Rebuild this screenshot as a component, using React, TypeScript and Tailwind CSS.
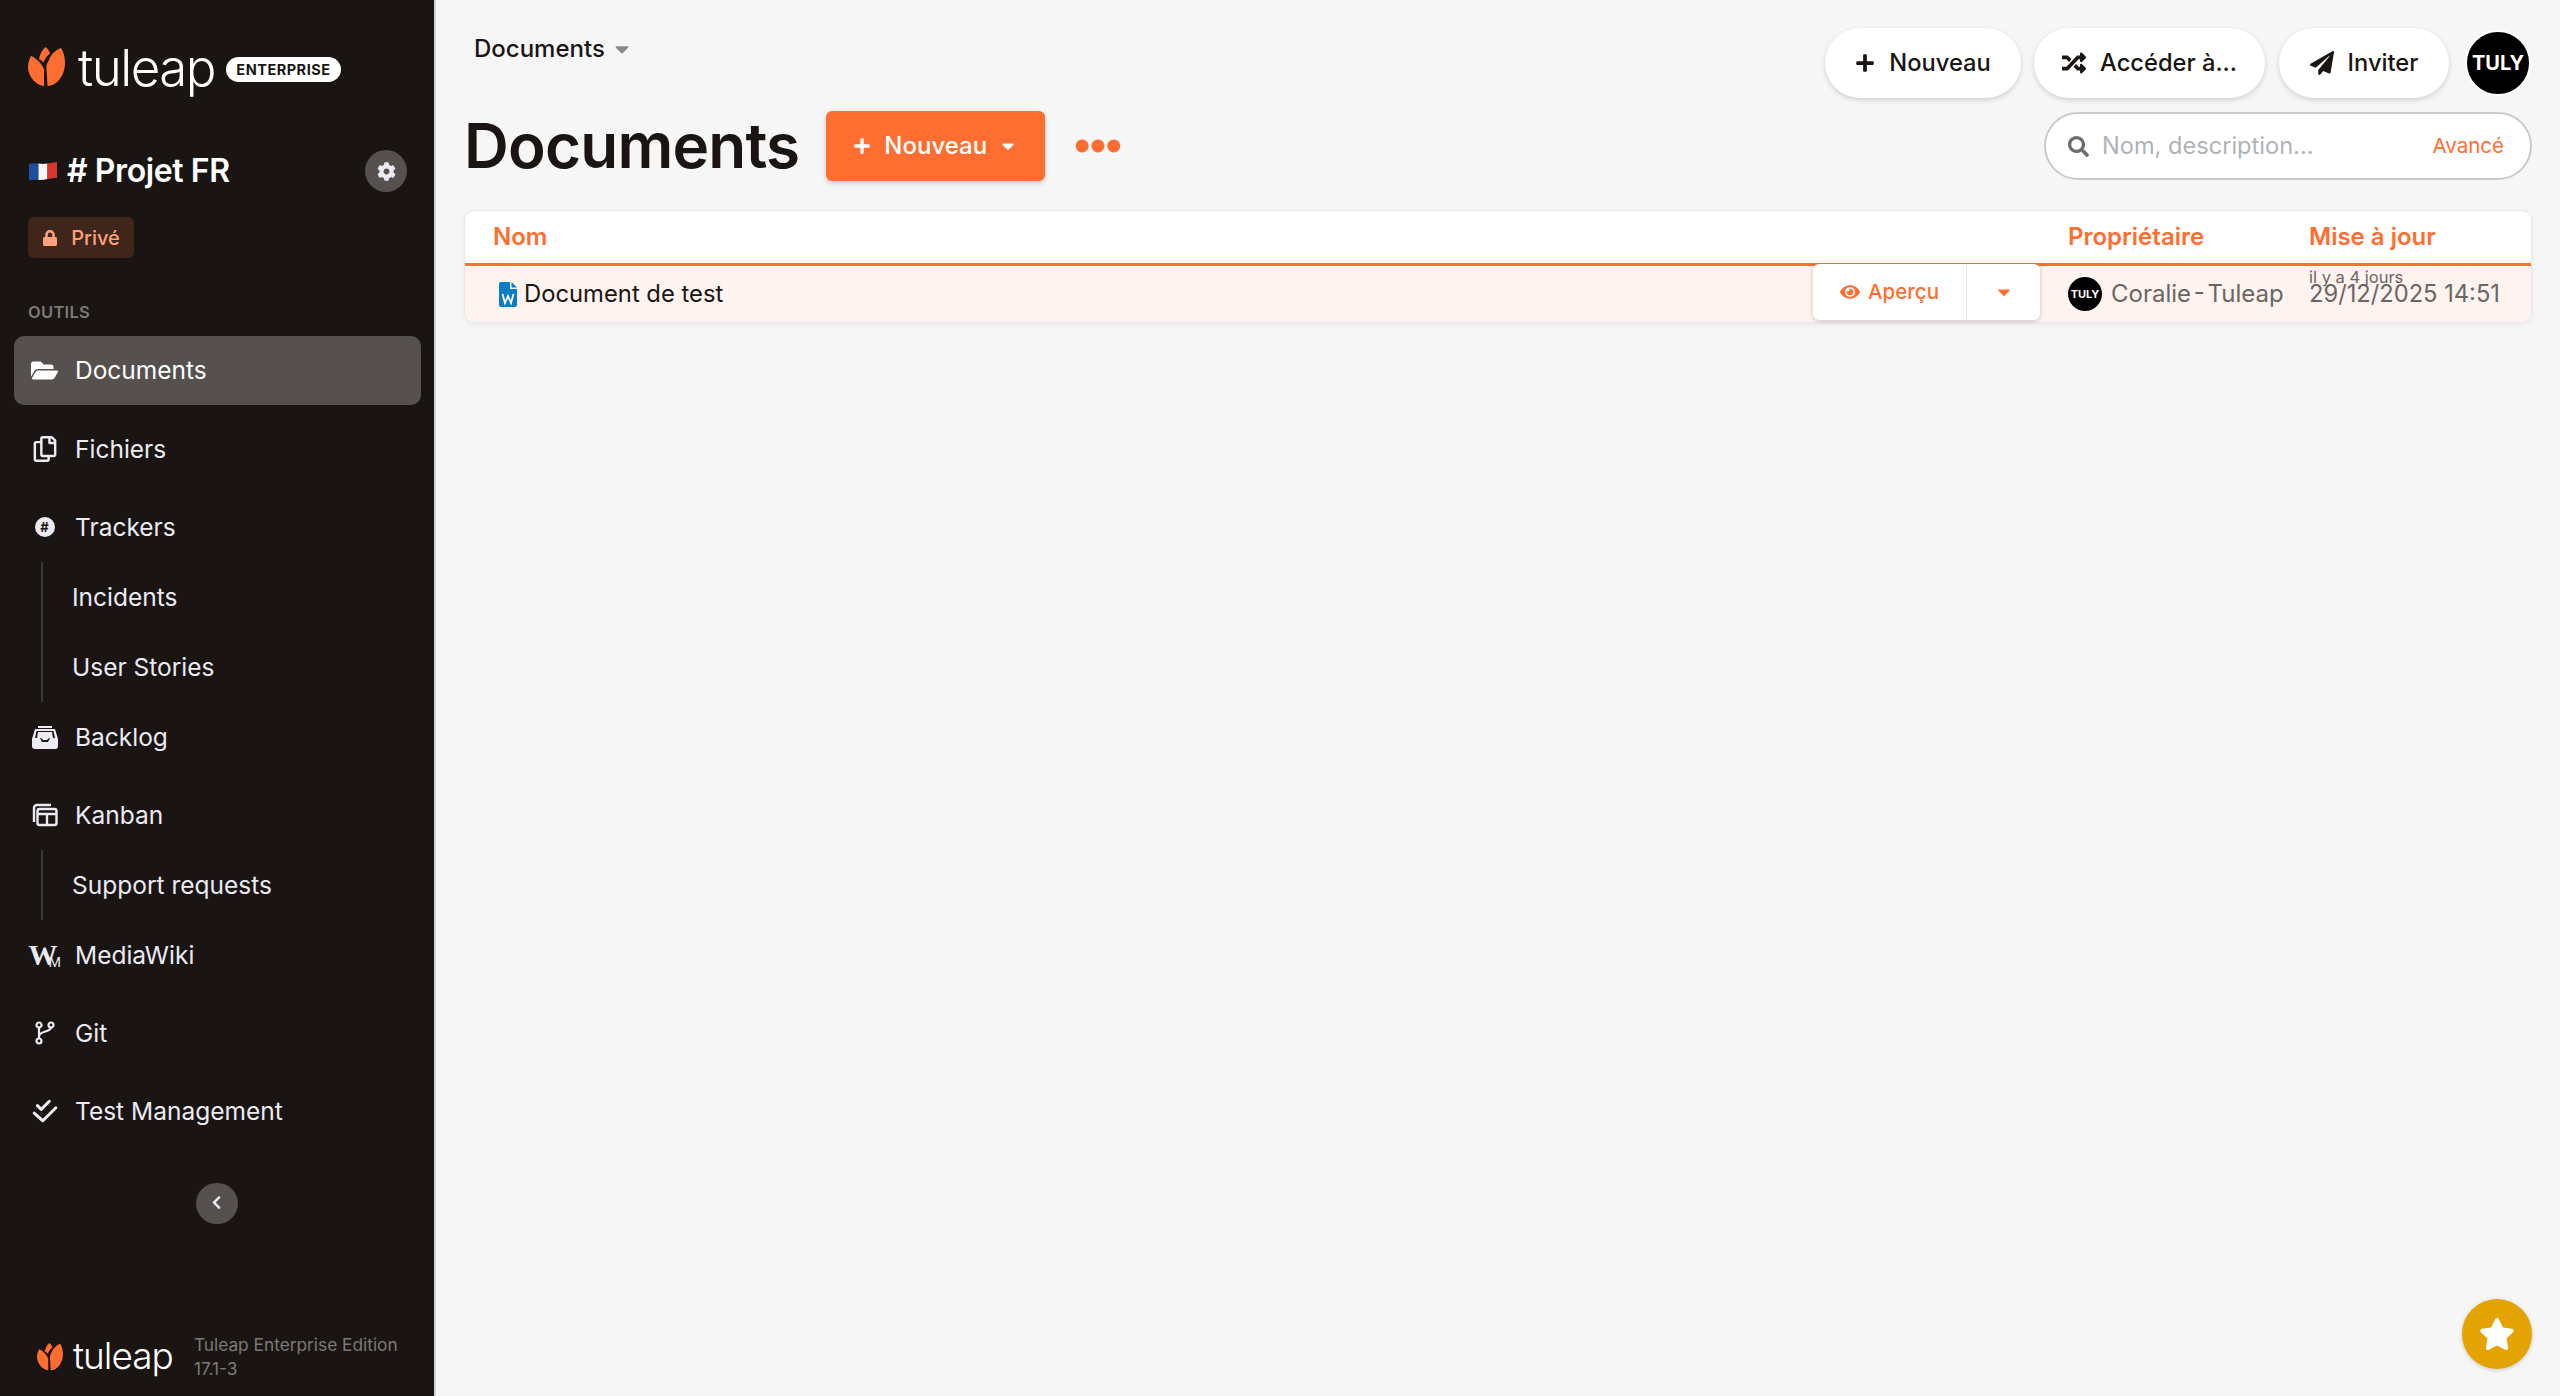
import React from 'react';
import {
  FaCaretDown,
  FaChevronLeft,
  FaCog,
  FaEllipsisH,
  FaEye,
  FaFolderOpen,
  FaLock,
  FaPaperPlane,
  FaPlus,
  FaRandom,
  FaRegCopy,
  FaSearch,
  FaStar,
} from 'react-icons/fa';

const Tulip = ({ className }: { className: string }) => (
  <svg viewBox="0 0 37 40" className={className}>
    <path fill="#ff6e30" d="M17 39C8 39 0 29 0 20c0-5 2-9 3-11 3 1 7 4 10 8l3 5 0 17z" />
    <path fill="#ff6e30" d="M19.500 39C29 39 37 28 37 16c0-7-2-12-4-15-5 2-10 6-12 12-2 3-3 6-2.500 9z" />
    <path fill="#ff6e30" d="M11 12c1-5 3-9 6.500-12 2 1.500 4 4 4.500 6.500-3 2-5 5-6.500 9-1-1.500-2.500-2.500-4.500-3.500z" />
  </svg>
);

const BacklogIcon = () => (
  <svg viewBox="0 0 28 24" className="h-[24px] w-[28px]" fill="#ecebf4">
    <path d="M7 1h14v2H7zM5.500 4h17L23 6H5z" />
    <path fillRule="evenodd" d="M4 4 1 14v7a3 3 0 0 0 3 3h20a3 3 0 0 0 3-3v-7L24 4h-2l2 9h-5l-2 4h-6l-2-4H4l2-9zM7 7h14l1 6h-4l-2 2h-4l-2-2H6z" />
  </svg>
);

const KanbanIcon = () => (
  <svg viewBox="0 0 26 24" className="h-[24px] w-[26px]" fill="none" stroke="#ecebf4" strokeWidth="2.400">
    <path d="M2 19V5a3 3 0 0 1 3-3h14" />
    <rect x="5.500" y="6" width="19" height="16" rx="2" />
    <path d="M5.500 11h19M15 11v11" />
  </svg>
);

const TrackerIcon = () => (
  <span className="flex h-[20px] w-[20px] items-center justify-center rounded-full bg-[#ecebf4] text-[13px] leading-none font-bold text-[#1a1512]">
    #
  </span>
);

const WikiIcon = () => (
  <span className="flex h-[26px] w-[32px] items-start font-['Liberation_Serif',serif] leading-none font-bold text-[#ecebf4]">
    <span className="-mt-[1px] text-[29px]">W</span>
    <span className="-ml-[9px] pt-[12px] font-['Liberation_Sans',sans-serif] text-[15px] font-normal">M</span>
  </span>
);

const GitIcon = () => (
  <svg viewBox="0 0 20 24" className="h-[24px] w-[20px]" fill="none" stroke="#ecebf4" strokeWidth="2.200">
    <circle cx="4" cy="4" r="2.500" />
    <circle cx="4" cy="20" r="2.500" />
    <circle cx="16" cy="4" r="2.500" />
    <path d="M4 6.500v11M16 6.500c0 5-12 3-12 9" />
  </svg>
);

const TestIcon = () => (
  <svg viewBox="0 0 24 22" className="h-[24px] w-[26px]" fill="none" stroke="#ecebf4" strokeWidth="2.800" strokeLinecap="round" strokeLinejoin="round">
    <path d="M5 6l3.500 3.500L16 2M2 13l8 7 12-12" />
  </svg>
);

const WordIcon = () => (
  <svg viewBox="0 0 18 25" className="h-[25px] w-[18px]">
    <path fill="#0c7cc4" d="M2 0h9v7h7v16a2 2 0 0 1-2 2H2a2 2 0 0 1-2-2V2a2 2 0 0 1 2-2z" />
    <path fill="#0c7cc4" d="M12.500 0 18 5.500h-5.500z" />
    <path fill="none" stroke="#fff" strokeWidth="1.800" d="M3.500 12l2.500 9 3-7 3 7 2.500-9" />
  </svg>
);

interface NavItem {
  label: string;
  icon: React.ReactNode;
  children?: string[];
}

const navItems: NavItem[] = [
  { label: 'Fichiers', icon: <FaRegCopy className="text-[26px] text-[#ecebf4]" /> },
  { label: 'Trackers', icon: <TrackerIcon />, children: ['Incidents', 'User Stories'] },
  { label: 'Backlog', icon: <BacklogIcon /> },
  { label: 'Kanban', icon: <KanbanIcon />, children: ['Support requests'] },
  { label: 'MediaWiki', icon: <WikiIcon /> },
  { label: 'Git', icon: <GitIcon /> },
  { label: 'Test Management', icon: <TestIcon /> },
];

const Sidebar = () => (
  <aside className="flex h-[1396px] w-[436px] shrink-0 flex-col border-r-[2px] border-[#d3d2d1] bg-[#1a1512] pl-[14px] text-[#ecebf4]">
    <div className="mt-[44px] flex h-[46px] items-center pl-[14px]">
      <Tulip className="h-[40px] w-[37px]" />
      <span className="ml-[13px] text-[51px] leading-none font-light tracking-[-1.500px] text-white">tuleap</span>
      <span className="mt-[5px] ml-[11px] flex h-[25px] w-[115px] items-center justify-center rounded-full bg-white text-[14.500px] font-bold tracking-[0.500px] text-[#1a1512]">
        ENTERPRISE
      </span>
    </div>

    <div className="mt-[60px] flex h-[42px] w-[393px] items-center justify-between pl-[15px]">
      <div className="flex items-center">
        <svg viewBox="0 0 28 19" className="h-[19px] w-[28px]">
          <path fill="#1d4f9c" d="M0 2c3-1 6-1 9.500-.500V18C6 17.500 3 17.500 0 18.500z" />
          <path fill="#f5f5f5" d="M9.500 1.500c3 .5 6 .5 9 0V17c-3 .8-6 1.200-9 1z" />
          <path fill="#d9352c" d="M18.500 1.500c3-.5 6-1 9.500-1.500v16c-3 0-6.500.5-9.500 1z" />
        </svg>
        <span className="ml-[10px] text-[32px] leading-none font-semibold tracking-[-0.400px] text-white">
          # Projet FR
        </span>
      </div>
      <span className="flex h-[42px] w-[42px] items-center justify-center rounded-full bg-[#56514e]">
        <FaCog className="text-[19px]" />
      </span>
    </div>

    <div className="mt-[25px] ml-[14px] flex h-[41px] w-[106px] items-center justify-center gap-[13px] rounded-[6px] bg-[#40251a] text-[20px] font-medium text-[#ffa27b]">
      <FaLock className="text-[16px]" />
      <span>Privé</span>
    </div>

    <div className="mt-[44px] ml-[14px] text-[16.500px] leading-[20px] font-semibold tracking-[0.300px] text-[#7d7977]">
      OUTILS
    </div>

    <nav className="mt-[14px] flex w-[407px] flex-col">
      <div className="mb-[5px] flex h-[69px] items-center rounded-[10px] bg-[#56514e]">
        <span className="flex w-[61px] justify-center">
          <FaFolderOpen className="text-[27px] text-white" />
        </span>
        <span className="text-[24.500px] leading-none text-white">Documents</span>
      </div>
      {navItems.map((item) => (
        <div key={item.label} className="flex flex-col">
          <div className="flex h-[78px] items-center">
            <span className="flex w-[61px] justify-center">{item.icon}</span>
            <span className="text-[24.500px] leading-none text-[#ecebf4]">{item.label}</span>
          </div>
          {item.children && (
            <div className="-mt-[4px] -mb-[4px] ml-[27px] flex flex-col border-l-[2px] border-[#3c3835]">
              {item.children.map((child) => (
                <div key={child} className="flex h-[70px] items-center pl-[29px] text-[24.500px] leading-none text-[#ecebf4]">
                  {child}
                </div>
              ))}
            </div>
          )}
        </div>
      ))}
    </nav>

    <button className="mt-[33px] ml-[182px] flex h-[41px] w-[42px] items-center justify-center rounded-full bg-[#56514e]">
      <FaChevronLeft className="-mt-[2px] -ml-[2px] text-[15px]" />
    </button>

    <div className="mt-auto mb-[15px] flex items-center pl-[23px]">
      <Tulip className="h-[28px] w-[26px]" />
      <span className="-mt-[3px] ml-[10px] text-[37px] leading-none font-light tracking-[-1px] text-white">tuleap</span>
      <div className="ml-[21px] text-[17.300px] leading-[24px] text-[#7d7977]">
        <div>Tuleap Enterprise Edition</div>
        <div>17.1-3</div>
      </div>
    </div>
  </aside>
);

const PillButton = ({ icon, label, width }: { icon: React.ReactNode; label: string; width: string }) => (
  <button className={`flex h-[70px] items-center justify-center gap-[14px] rounded-full bg-white text-[23.700px] font-medium text-[#1a1512] shadow-[0_2px_5px_rgba(0,0,0,0.16)] ${width}`}>
    {icon}
    <span>{label}</span>
  </button>
);

const Main = () => (
  <main className="flex h-[1396px] flex-1 flex-col pt-[28px] pr-[28px] pl-[28px]">
    <div className="flex h-[70px] items-start justify-between">
      <div className="mt-[8px] ml-[10px] flex items-center gap-[6px] text-[24px] leading-[26px] font-medium text-[#1a1512]">
        Documents
        <FaCaretDown className="text-[22px] text-[#8c8886]" />
      </div>
      <div className="flex items-center">
        <PillButton icon={<FaPlus className="text-[20px]" />} label="Nouveau" width="w-[196px]" />
        <div className="ml-[13px]">
          <PillButton icon={<FaRandom className="text-[24px]" />} label="Accéder à..." width="w-[231px]" />
        </div>
        <div className="ml-[14px]">
          <PillButton icon={<FaPaperPlane className="text-[24px]" />} label="Inviter" width="w-[170px]" />
        </div>
        <span className="mr-[1px] ml-[16px] flex h-[66px] w-[66px] items-center justify-center rounded-full border-[2px] border-white bg-black text-[20px] font-bold text-white">
          TULY
        </span>
      </div>
    </div>

    <div className="mt-[13px] flex h-[70px] items-center justify-between">
      <div className="flex items-center">
        <h1 className="text-[62px] leading-none font-semibold tracking-[-0.800px] text-[#1a1512]">Documents</h1>
        <button className="ml-[27px] flex h-[70px] w-[219px] items-center justify-center gap-[13px] rounded-[6px] bg-[#ff6e30] text-[24px] font-medium text-white shadow-[0_2px_5px_rgba(0,0,0,0.2)]">
          <FaPlus className="text-[18px]" />
          <span>Nouveau</span>
          <FaCaretDown className="-ml-[2px] text-[20px]" />
        </button>
        <FaEllipsisH className="ml-[30px] text-[46px] text-[#ff6e30]" />
      </div>
      <div className="flex h-[68px] w-[488px] items-center rounded-full border-[2px] border-[#c6cbd0] bg-white pr-[26px] pl-[22px]">
        <FaSearch className="text-[21px] text-[#6f6b69]" />
        <span className="ml-[13px] flex-1 text-[23.600px] text-[#aeb3b8]">Nom, description...</span>
        <span className="text-[20.500px] text-[#ff6e30]">Avancé</span>
      </div>
    </div>

    <div className="mt-[29px] flex flex-col rounded-[10px] border-[1px] border-[#e7e6ef] bg-white shadow-[0_2px_5px_rgba(0,0,0,0.05)]">
      <div className="flex h-[55px] items-center border-b-[3px] border-[#ff6e30] text-[24px] font-semibold text-[#ff6e30]">
        <span className="flex-1 pl-[28px]">Nom</span>
        <span className="w-[241px]">Propriétaire</span>
        <span className="w-[222px]">Mise à jour</span>
      </div>
      <div className="flex h-[56px] items-center rounded-b-[10px] bg-[#fff3ef]">
        <div className="flex flex-1 items-center gap-[7px] pl-[34px] text-[23.800px] text-[#1a1512]">
          <WordIcon />
          <span>Document de test</span>
        </div>
        <div className="-mt-[4px] mr-[28px] flex h-[56px] w-[227px] items-center rounded-[6px] bg-white text-[20.500px] font-medium text-[#ff6e30] shadow-[0_1px_4px_rgba(0,0,0,0.22)]">
          <span className="flex h-full w-[154px] items-center justify-center gap-[8px] border-r-[1px] border-[#ece9e9]">
            <FaEye className="text-[20px]" />
            Aperçu
          </span>
          <span className="flex flex-1 justify-center">
            <FaCaretDown className="text-[20px]" />
          </span>
        </div>
        <div className="flex w-[241px] items-center gap-[9px] text-[24px] text-[#6b6663] [word-spacing:-4px]">
          <span className="flex h-[34px] w-[34px] items-center justify-center rounded-full bg-black text-[11px] font-bold text-white">
            TULY
          </span>
          <span>Coralie - Tuleap</span>
        </div>
        <div className="-mt-[14px] flex w-[222px] flex-col text-[#6b6663]">
          <span className="text-[16.500px] leading-[14px]">il y a 4 jours</span>
          <span className="text-[23.700px] leading-[20px]">29/12/2025 14:51</span>
        </div>
      </div>
    </div>
  </main>
);

export default function App() {
  return (
    <div className="relative flex h-[1396px] w-[2560px] overflow-hidden bg-[#f6f6f6] font-['Inter',sans-serif]">
      <Sidebar />
      <Main />
      <button className="absolute right-[28px] bottom-[27px] flex h-[70px] w-[70px] items-center justify-center rounded-full bg-[#e3a300] text-[36px] text-white shadow-[0_1px_4px_rgba(0,0,0,0.2)]">
        <FaStar />
      </button>
    </div>
  );
}
